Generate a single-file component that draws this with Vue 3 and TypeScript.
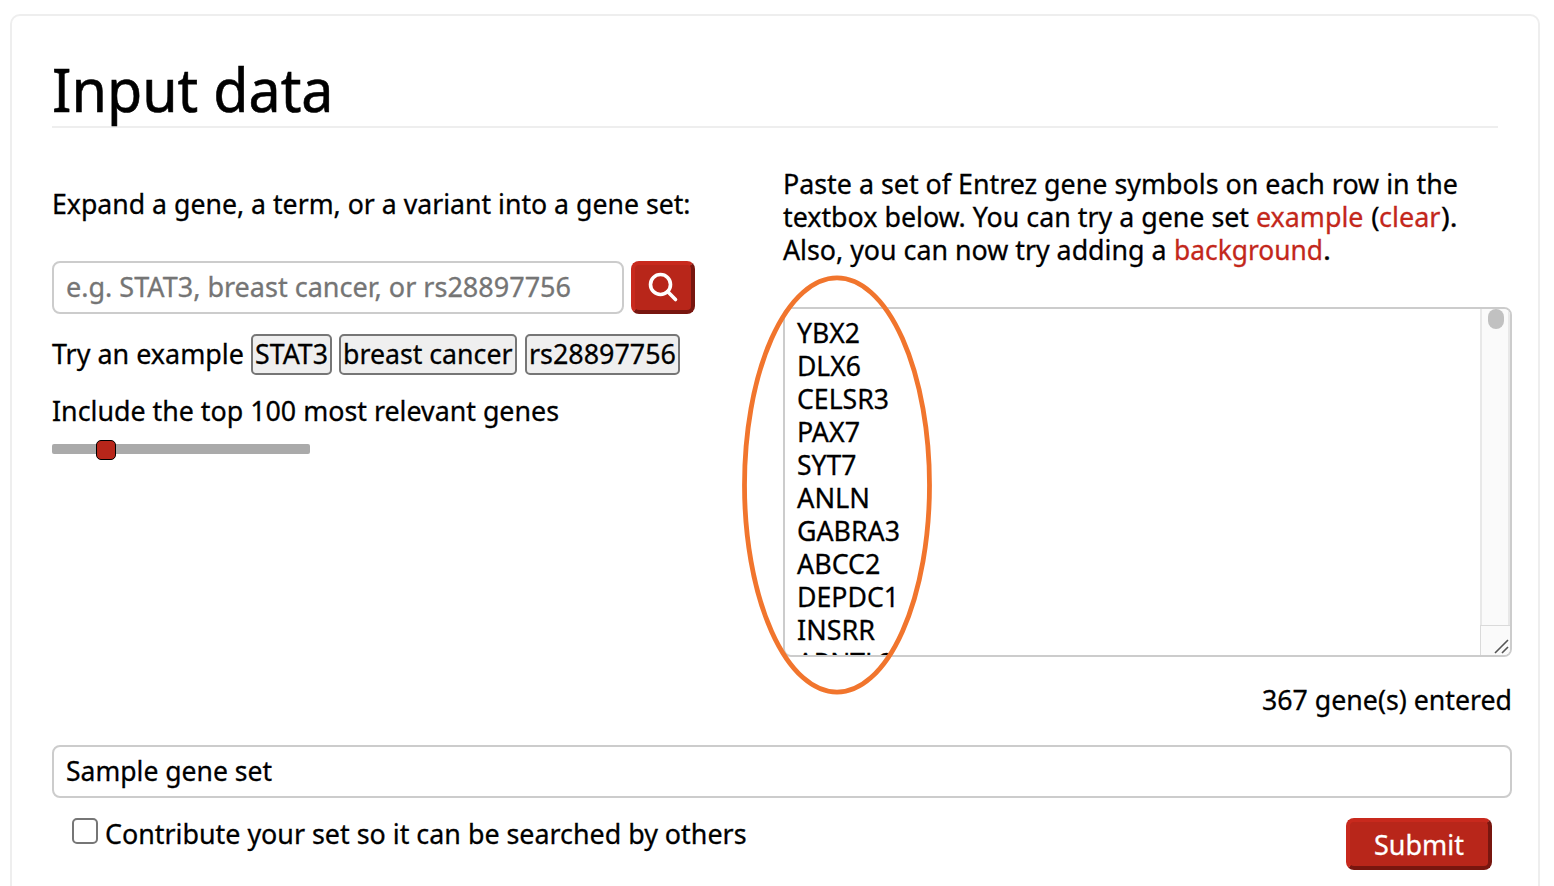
<script setup lang="ts">
import { ref, type Directive } from 'vue'

interface Run {
  text: string
  width: number
}

// Condenses a run of text horizontally so that it occupies the given advance width.
const vFit: Directive<HTMLElement, number> = {
  mounted(el, { value }) {
    const natural = el.getBoundingClientRect().width
    el.style.transform = `scaleX(${value / natural})`
    el.style.marginRight = `${value - natural}px`
  },
}

const examples: Run[] = [
  { text: 'STAT3', width: 73 },
  { text: 'breast cancer', width: 169.5 },
  { text: 'rs28897756', width: 147 },
]

const genes: Run[] = [
  { text: 'YBX2', width: 63 },
  { text: 'DLX6', width: 64 },
  { text: 'CELSR3', width: 92 },
  { text: 'PAX7', width: 63 },
  { text: 'SYT7', width: 59.5 },
  { text: 'ANLN', width: 73 },
  { text: 'GABRA3', width: 103 },
  { text: 'ABCC2', width: 83.5 },
  { text: 'DEPDC1', width: 102 },
  { text: 'INSRR', width: 78 },
  { text: 'ARNTL2', width: 97 },
]

const sliderPosition = ref(44)
</script>

<template>
  <main class="page">
    <section class="panel">
      <h1 class="title"><span v-fit="281.5" class="fit">Input data</span></h1>

      <div class="columns">
        <div class="expand">
          <p class="line"><span v-fit="638.5" class="fit">Expand a gene, a term, or a variant into a gene set:</span></p>
          <div class="search">
            <div class="field search-field">
              <span v-fit="505" class="fit">e.g. STAT3, breast cancer, or rs28897756</span>
            </div>
            <button class="red-button search-button" aria-label="Search">
              <svg width="32" height="32" viewBox="0 0 32 32">
                <circle cx="13.5" cy="12.5" r="10" />
                <path d="M20.6 19.6 L28.5 27.5" />
              </svg>
            </button>
          </div>
          <div class="examples">
            <span class="examples-label"><span v-fit="192" class="fit">Try an example</span></span>
            <button v-for="item in examples" :key="item.text" class="chip">
              <span v-fit="item.width" class="fit">{{ item.text }}</span>
            </button>
          </div>
          <p class="line"><span v-fit="507" class="fit">Include the top 100 most relevant genes</span></p>
          <div class="slider">
            <div class="thumb" :style="{ marginLeft: sliderPosition + 'px' }"></div>
          </div>
        </div>

        <div class="paste">
          <p class="line"><span v-fit="675" class="fit">Paste a set of Entrez gene symbols on each row in the</span></p>
          <p class="line"><span v-fit="473" class="fit">textbox below. You can try a gene set </span><a v-fit="107.5" class="fit">example</a><span v-fit="15.5" class="fit"> (</span><a v-fit="61.5" class="fit">clear</a><span v-fit="16.5" class="fit">).</span></p>
          <p class="line"><span v-fit="390.5" class="fit">Also, you can now try adding a </span><a v-fit="149" class="fit">background</a><span v-fit="8" class="fit">.</span></p>
          <div class="textarea">
            <div class="genes">
              <div v-for="gene in genes" :key="gene.text" class="line">
                <span v-fit="gene.width" class="fit">{{ gene.text }}</span>
              </div>
            </div>
            <div class="scrollbar">
              <div class="scroll-thumb"></div>
              <div class="resizer">
                <svg width="28" height="29" viewBox="0 0 28 29">
                  <path d="M13 27 L26 14 M20 27 L26 21" />
                </svg>
              </div>
            </div>
          </div>
          <p class="line count"><span v-fit="250" class="fit">367 gene(s) entered</span></p>
        </div>
      </div>

      <div class="field name-field"><span v-fit="206" class="fit">Sample gene set</span></div>

      <div class="footer">
        <label class="contribute">
          <span class="checkbox"></span>
          <span v-fit="641.5" class="fit">Contribute your set so it can be searched by others</span>
        </label>
        <button class="red-button submit"><span v-fit="90" class="fit">Submit</span></button>
      </div>

      <svg class="highlight" width="200" height="430" viewBox="0 0 200 430">
        <ellipse cx="100" cy="215" rx="92.5" ry="207.1" />
      </svg>
    </section>
  </main>
</template>

<style>
body {
  margin: 0;
  background: #fff;
}
</style>

<style scoped>
.page {
  height: 886px;
  overflow: hidden;
  box-sizing: border-box;
  padding: 14px 14px 0 10px;
  background: #fff;
  color: #000;
  font: 28px/33px 'Noto Sans', 'Open Sans', sans-serif;
}
.page * {
  box-sizing: border-box;
}
.panel {
  position: relative;
  height: 900px;
  border: 2px solid #eee;
  border-radius: 10px;
  padding: 40px;
}
.fit {
  display: inline-block;
  white-space: pre;
  transform-origin: 0 50%;
  -webkit-text-stroke: 0.3px currentColor;
}
.title {
  margin: 0;
  height: 72px;
  width: 1446px;
  border-bottom: 2px solid #eee;
  font-size: 61px;
  font-weight: 400;
  line-height: 66px;
}
.title .fit {
  -webkit-text-stroke-width: 0.6px;
}
.columns {
  display: flex;
  height: 617px;
}
.expand {
  flex: none;
  width: 731px;
  padding-top: 59px;
}
.paste {
  flex: none;
  width: 729px;
  padding-top: 39px;
}
.line {
  margin: 0;
  height: 33px;
  white-space: nowrap;
}
a {
  color: #c3271b;
}
.search {
  display: flex;
  gap: 7px;
  margin-top: 41px;
}
.field {
  height: 53px;
  border: 2px solid #ccc;
  border-radius: 8px;
  padding: 7px 12px;
  white-space: nowrap;
}
.search-field {
  width: 572px;
  color: #757575;
}
.red-button {
  display: flex;
  align-items: center;
  justify-content: center;
  margin: 0;
  padding: 0;
  border: 4px solid;
  border-color: #c8291d #78160f #78160f #c8291d;
  border-radius: 8px;
  background: #b8261a;
  color: #fff;
  font: inherit;
}
.search-button {
  width: 64px;
  height: 53px;
}
.search-button svg {
  fill: none;
  stroke: #fff;
  stroke-width: 3.6;
  stroke-linecap: round;
}
.examples {
  display: flex;
  margin-top: 20px;
  height: 41px;
}
.examples-label {
  width: 199px;
  padding-top: 3px;
}
.chip {
  height: 41px;
  margin: 0 8px 0 0;
  padding: 0 2px 2px;
  border: 2px solid #767676;
  border-radius: 5px;
  background: #efefef;
  color: #000;
  font: inherit;
  white-space: nowrap;
}
.chip:nth-child(2) {
  margin-right: 7px;
}
.chip:nth-child(3) {
  width: 178px;
}
.examples + .line {
  margin-top: 19px;
}
.slider {
  width: 258px;
  height: 10px;
  margin-top: 17px;
  border-radius: 2px;
  background: #aaa;
  display: flex;
}
.thumb {
  flex: none;
  width: 20px;
  height: 20px;
  margin-top: -4px;
  border: 1px solid #000;
  border-radius: 5px;
  background: #b8261a;
}
.textarea {
  display: flex;
  height: 350px;
  margin-top: 41px;
  border: 2px solid #ccc;
  border-radius: 8px;
  overflow: hidden;
}
.genes {
  flex: 1;
  padding: 7px 12px;
}
.scrollbar {
  display: flex;
  flex-direction: column;
  justify-content: space-between;
  width: 30px;
  border: solid #e8e8e8;
  border-width: 0 2px;
  background: #fafafa;
}
.scroll-thumb {
  width: 16px;
  height: 20px;
  margin-left: 6px;
  border-radius: 8px;
  background: #c1c1c1;
}
.resizer {
  flex: none;
  height: 30px;
  margin: 0 -2px 0 -2px;
  border: solid #dadada;
  border-width: 1px 0 0 1px;
  background: #fafafa;
}
.resizer svg {
  display: block;
  fill: none;
  stroke: #555;
  stroke-width: 1.6;
  margin-left: 1px;
}
.count {
  margin-top: 26px;
  text-align: right;
}
.name-field {
  width: 1460px;
}
.footer {
  display: flex;
  justify-content: space-between;
  width: 1460px;
  padding: 20px 20px 0;
}
.contribute {
  display: flex;
  gap: 7px;
  margin-top: -1px;
  white-space: nowrap;
}
.checkbox {
  width: 26px;
  height: 26px;
  margin-top: 1px;
  border: 2px solid #767676;
  border-radius: 5px;
}
.submit {
  width: 146px;
  height: 52px;
}
.highlight {
  position: absolute;
  left: 725px;
  top: 253.5px;
  pointer-events: none;
  fill: none;
  stroke: #f1752d;
  stroke-width: 4.8;
}
</style>
